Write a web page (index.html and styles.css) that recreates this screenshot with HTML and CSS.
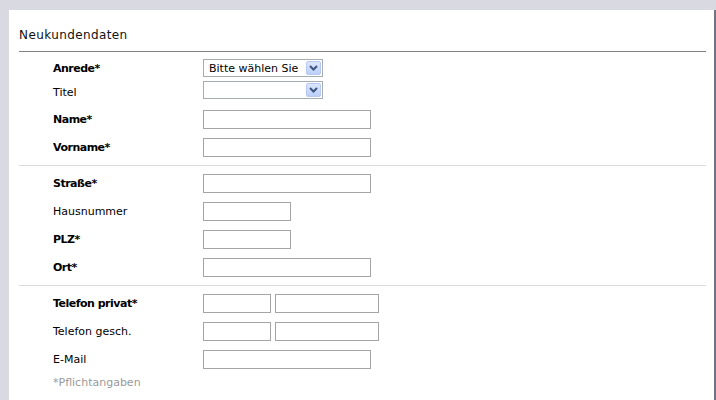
FILE: index.html
```html
<!DOCTYPE html>
<html lang="de">
<head>
  <meta charset="UTF-8">
  <title>Neukundendaten</title>
  <link rel="stylesheet" href="styles.css">
</head>
<body>
<main class="page">
  <h2 class="formTitle">Neukundendaten</h2>
  <form class="customerForm">
    <section class="formGroup">
      <div class="row selectRow">
        <label class="fieldLabel required">Anrede*</label>
        <div class="selectBox">
          <select><option>Bitte wählen Sie</option></select>
          <span class="selectArrow"><svg width="9" height="6" viewBox="0 0 9 6"><path d="M1 1 L4.5 4.5 L8 1" fill="none" stroke="#3e5580" stroke-width="2"/></svg></span>
        </div>
      </div>
      <div class="row selectRow">
        <label class="fieldLabel">Titel</label>
        <div class="selectBox">
          <select><option></option></select>
          <span class="selectArrow"><svg width="9" height="6" viewBox="0 0 9 6"><path d="M1 1 L4.5 4.5 L8 1" fill="none" stroke="#3e5580" stroke-width="2"/></svg></span>
        </div>
      </div>
      <div class="row">
        <label class="fieldLabel required">Name*</label>
        <input class="field long" type="text">
      </div>
      <div class="row">
        <label class="fieldLabel required">Vorname*</label>
        <input class="field long" type="text">
      </div>
    </section>
    <section class="formGroup">
      <div class="row">
        <label class="fieldLabel required">Straße*</label>
        <input class="field long" type="text">
      </div>
      <div class="row">
        <label class="fieldLabel">Hausnummer</label>
        <input class="field short" type="text">
      </div>
      <div class="row">
        <label class="fieldLabel required">PLZ*</label>
        <input class="field short" type="text">
      </div>
      <div class="row">
        <label class="fieldLabel required">Ort*</label>
        <input class="field long" type="text">
      </div>
    </section>
    <section class="formGroup last">
      <div class="row">
        <label class="fieldLabel required">Telefon privat*</label>
        <div class="phoneFields">
          <input class="field prefix" type="text">
          <input class="field number" type="text">
        </div>
      </div>
      <div class="row">
        <label class="fieldLabel">Telefon gesch.</label>
        <div class="phoneFields">
          <input class="field prefix" type="text">
          <input class="field number" type="text">
        </div>
      </div>
      <div class="row">
        <label class="fieldLabel">E-Mail</label>
        <input class="field long" type="text">
      </div>
      <p class="hint">*Pflichtangaben</p>
    </section>
  </form>
</main>
</body>
</html>
```

FILE: styles.css
```css
:root {
  --pageBg: #d9d9e1;
  --frameColor: #727282;
  --fieldBorder: #a5a5a8;
  --textColor: #000;
}
html, body {
  height: 100%;
}
body {
  margin: 0;
  background: var(--pageBg);
  font-family: "DejaVu Sans", Verdana, sans-serif;
  font-size: 11px;
  color: var(--textColor);
  overflow: hidden;
}
.page {
  margin: 10px 0 0 9px;
  width: 705px;
  min-height: 400px;
  background: #fff;
  border-right: 2px solid var(--frameColor);
}
.formTitle {
  margin: 0 8px 0 10px;
  padding: 18px 0 9px;
  font-size: 12px;
  line-height: 14px;
  letter-spacing: 0.4px;
  font-weight: normal;
  color: #111;
  border-bottom: 1px solid #808080;
}
.customerForm {
  margin: 0;
}
.formGroup {
  margin: 0 8px 0 10px;
  padding: 3px 0 4px;
  border-bottom: 1px solid #dcdcdc;
}
.formGroup:first-child {
  padding-top: 5px;
}
.formGroup.last {
  border-bottom: none;
}
.row {
  display: flex;
  align-items: center;
  height: 28px;
  padding-left: 34px;
}
.row.selectRow {
  height: 22px;
}
.selectRow + .selectRow .fieldLabel {
  padding-top: 4px;
}
.selectRow + .row:not(.selectRow) {
  margin-top: 4px;
}
.fieldLabel {
  width: 150px;
  flex-shrink: 0;
}
.fieldLabel.required {
  font-weight: bold;
  letter-spacing: -0.5px;
}
.field {
  box-sizing: border-box;
  height: 19px;
  margin: 0;
  padding: 1px 3px;
  border: 1px solid var(--fieldBorder);
  background: #fff;
  font: inherit;
}
.field.long {
  width: 168px;
}
.field.short {
  width: 88px;
}
.phoneFields {
  display: flex;
  gap: 4px;
}
.field.prefix {
  width: 68px;
}
.field.number {
  width: 104px;
}
.selectBox {
  display: flex;
  align-items: center;
  box-sizing: border-box;
  width: 120px;
  height: 18px;
  padding: 1px;
  border: 1px solid #a5acb2;
  background: #fff;
}
.selectBox select {
  flex: 1;
  min-width: 0;
  height: 14px;
  margin: 0;
  padding: 0 0 0 4px;
  border: none;
  outline: none;
  background: transparent;
  font: inherit;
  color: #000;
  -webkit-appearance: none;
  appearance: none;
}
.selectArrow {
  display: flex;
  align-items: center;
  justify-content: center;
  box-sizing: border-box;
  width: 15px;
  height: 14px;
  border: 1px solid #b7c8f2;
  border-radius: 2px;
  background: linear-gradient(#dce6fd, #bccff8);
}
.hint {
  margin: 0;
  height: 20px;
  line-height: 20px;
  padding-left: 34px;
  color: #999;
}
```
